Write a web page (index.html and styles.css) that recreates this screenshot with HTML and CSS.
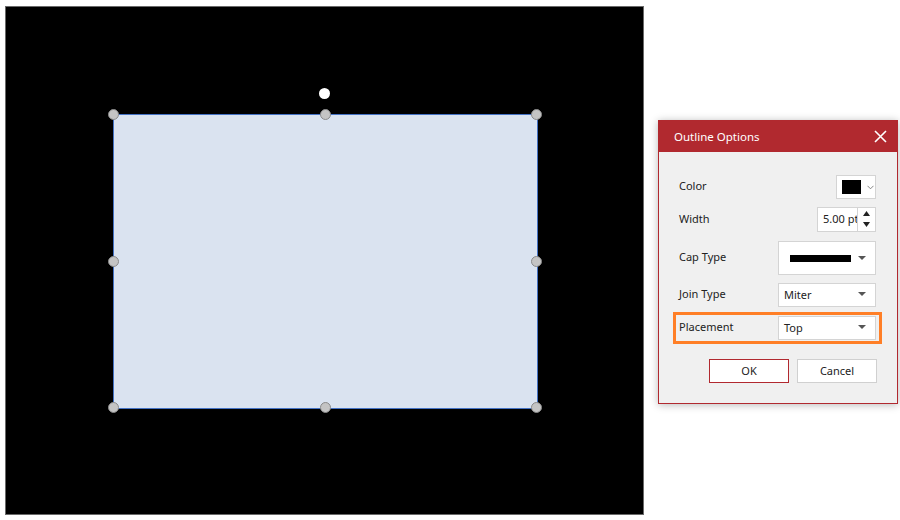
FILE: index.html
```html
<!DOCTYPE html>
<html lang="en">
  <head>
    <meta charset="UTF-8" />
    <title>Outline Options</title>
    <link rel="stylesheet" href="styles.css">
  </head>
  <body>
    <div class="canvas">
      <div class="rotate"></div>
      <div class="shape">
        <span class="handle tl"></span>
        <span class="handle tm"></span>
        <span class="handle tr"></span>
        <span class="handle ml"></span>
        <span class="handle mr"></span>
        <span class="handle bl"></span>
        <span class="handle bm"></span>
        <span class="handle br"></span>
      </div>
    </div>

    <div class="dialog">
      <div class="dialog-header">
        <span>Outline Options</span>
        <svg class="close" width="13" height="13" viewBox="0 0 13 13">
          <path d="M1 1 L12 12 M12 1 L1 12" stroke="#fff" stroke-width="1.6" fill="none" />
        </svg>
      </div>
      <div class="dialog-body">
        <div class="row row-color">
          <label>Color</label>
          <div class="color-pick">
            <span class="swatch"></span>
            <svg width="7" height="5" viewBox="0 0 7 5">
              <path d="M0.5 0.8 L3.5 3.8 L6.5 0.8" stroke="#777" stroke-width="0.9" fill="none" />
            </svg>
          </div>
        </div>
        <div class="row row-width">
          <label>Width</label>
          <div class="spin">
            <span class="spin-value">5.00 pt</span>
            <div class="spin-btns">
              <svg width="7" height="5" viewBox="0 0 7 5"><path d="M0 5 L3.5 0 L7 5 Z" fill="#222" /></svg>
              <svg width="7" height="5" viewBox="0 0 7 5"><path d="M0 0 L3.5 5 L7 0 Z" fill="#222" /></svg>
            </div>
          </div>
        </div>
        <div class="row row-cap">
          <label>Cap Type</label>
          <div class="select select-cap">
            <span class="cap-line"></span>
            <span class="arrow"></span>
          </div>
        </div>
        <div class="row row-join">
          <label>Join Type</label>
          <div class="select">
            <span>Miter</span>
            <span class="arrow"></span>
          </div>
        </div>
        <div class="row row-place">
          <label>Placement</label>
          <div class="select">
            <span>Top</span>
            <span class="arrow"></span>
          </div>
        </div>
        <div class="buttons">
          <button class="btn btn-ok">OK</button>
          <button class="btn">Cancel</button>
        </div>
      </div>
    </div>
  </body>
</html>
```

FILE: styles.css
```css
* {
  margin: 0;
  padding: 0;
  box-sizing: border-box;
  font-family: "Noto Sans", "Open Sans", sans-serif;
}
body {
  display: flex;
  align-items: flex-start;
  background: #fff;
  width: 900px;
  height: 520px;
  overflow: hidden;
}

/* drawing canvas */
.canvas {
  position: relative;
  margin: 6px 0 0 5px;
  width: 639px;
  height: 509px;
  background: #000;
  border: 1px solid #6a6a6a;
}
.shape {
  position: absolute;
  left: 107px;
  top: 107px;
  width: 425px;
  height: 295px;
  background: #dae3f0;
  border: 1px solid #4472c4;
}
.handle {
  position: absolute;
  width: 11px;
  height: 11px;
  border-radius: 50%;
  background: #c4c4c4;
  border: 1px solid #8a8a8a;
  margin: -6px 0 0 -6px;
}
.tl { left: 0; top: 0; }
.tm { left: 50%; top: 0; }
.tr { left: 100%; top: 0; }
.ml { left: 0; top: 50%; }
.mr { left: 100%; top: 50%; }
.bl { left: 0; top: 100%; }
.bm { left: 50%; top: 100%; }
.br { left: 100%; top: 100%; }
.rotate {
  position: absolute;
  left: 313px;
  top: 81px;
  width: 11px;
  height: 11px;
  border-radius: 50%;
  background: #fff;
}

/* dialog */
.dialog {
  margin: 120px 0 0 14px;
  width: 240px;
  box-shadow: 0 1px 8px rgba(0, 0, 0, 0.28);
}
.dialog-header {
  height: 32px;
  background: #b1292f;
  color: #fff;
  font-size: 11.5px;
  display: flex;
  align-items: center;
  justify-content: space-between;
  padding: 0 11px 0 16px;
}
.dialog-body {
  background: #f0f0f0;
  border: 1px solid #b1292f;
  border-top: none;
  padding: 23px 0 20px;
  font-size: 11px;
  color: #222;
}
.row {
  display: flex;
  align-items: center;
  justify-content: space-between;
  padding: 0 21px 0 20px;
}
.row label {
  font-size: 11px;
  line-height: 14px;
  margin-top: -2px;
}
.row-width { margin-top: 8px; }
.row-cap { margin-top: 9px; }
.row-join { margin-top: 8px; }
.row-place {
  margin: 5px 15px 0 14px;
  padding: 1px 3px 1px 3px;
  border: 3px solid #ff7f27;
}

.color-pick {
  width: 40px;
  height: 24px;
  background: #fff;
  border: 1px solid #d4d4d4;
  display: flex;
  align-items: center;
  padding-left: 5px;
  gap: 6px;
}
.swatch {
  width: 19px;
  height: 14px;
  background: #000;
}
.spin {
  display: flex;
  height: 25px;
  background: #fff;
  border: 1px solid #d4d4d4;
}
.spin-value {
  width: 40px;
  padding-left: 5px;
  line-height: 22px;
  white-space: nowrap;
  overflow: hidden;
  border-right: 1px solid #d4d4d4;
  font-size: 11px;
}
.spin-btns {
  width: 17px;
  display: flex;
  flex-direction: column;
  align-items: center;
  justify-content: space-between;
  padding: 3px 0 4px;
}
.select {
  width: 98px;
  height: 24px;
  background: #fff;
  border: 1px solid #d4d4d4;
  display: flex;
  align-items: center;
  justify-content: space-between;
  padding: 0 9px 2px 5px;
}
.select-cap {
  height: 34px;
  padding: 0 9px 0 11px;
}
.cap-line {
  width: 61px;
  height: 7px;
  background: #000;
}
.arrow {
  width: 0;
  height: 0;
  border-left: 4px solid transparent;
  border-right: 4px solid transparent;
  border-top: 4px solid #555;
}
.buttons {
  display: flex;
  justify-content: flex-end;
  gap: 8px;
  margin-top: 15px;
  padding-right: 20px;
}
.btn {
  width: 80px;
  height: 24px;
  background: #fff;
  border: 1px solid #d0d0d0;
  font-size: 11px;
  color: #222;
  padding-bottom: 1px;
}
.btn-ok {
  border-color: #b1292f;
}
```
